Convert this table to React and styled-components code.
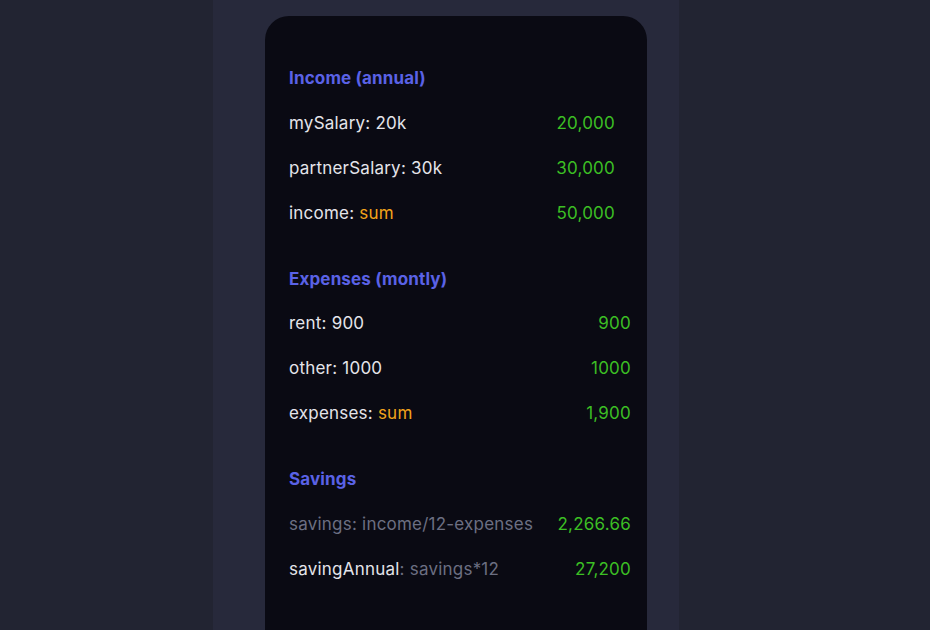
import React from 'react';
import styled, { createGlobalStyle } from 'styled-components';

const GlobalStyle = createGlobalStyle`
  html, body {
    margin: 0;
    padding: 0;
    background: #222432;
    font-family: Inter, "Noto Sans", sans-serif;
  }
`;

const Page = styled.div`
  height: 630px;
  overflow: hidden;
`;

const Strip = styled.div`
  margin-left: 213px;
  width: 466px;
  height: 100%;
  background: #27293b;
  padding: 16px 0 0 52px;
  box-sizing: border-box;
`;

const Card = styled.div`
  width: 382px;
  min-height: 700px;
  background: #0a0a13;
  border-radius: 24px;
  padding: 39px 16px 0 24px;
  box-sizing: border-box;
  display: flex;
  flex-direction: column;
  gap: 20.5px;
`;

const Section = styled.div`
  display: flex;
  flex-direction: column;
  padding-right: ${({ $inset }) => ($inset ? '16px' : '0')};
`;

const Heading = styled.div`
  height: 45px;
  padding-top: 2px;
  line-height: 43px;
  box-sizing: border-box;
  font-size: 17px;
  font-weight: 700;
  letter-spacing: 0.15px;
  color: #5a62e6;
`;

const Row = styled.div`
  height: 45px;
  display: flex;
  align-items: center;
  justify-content: space-between;
  font-size: 17px;
  letter-spacing: 0.22px;
  color: #e4e4ea;
`;

const Name = styled.span`
  color: ${({ $dim }) => ($dim ? '#6c6f82' : '#e4e4ea')};
`;

const Expr = styled.span`
  color: ${({ $kind }) => ($kind === 'sum' ? '#f2a31b' : '#6c6f82')};
`;

const Value = styled.span`
  color: #3cbf24;
`;

const sections = [
  {
    title: 'Income (annual)',
    inset: true,
    rows: [
      { name: 'mySalary: 20k', value: '20,000' },
      { name: 'partnerSalary: 30k', value: '30,000' },
      { name: 'income: ', expr: 'sum', kind: 'sum', value: '50,000' },
    ],
  },
  {
    title: 'Expenses (montly)',
    rows: [
      { name: 'rent: 900', value: '900' },
      { name: 'other: 1000', value: '1000' },
      { name: 'expenses: ', expr: 'sum', kind: 'sum', value: '1,900' },
    ],
  },
  {
    title: 'Savings',
    rows: [
      { name: 'savings: income/12-expenses', dim: true, value: '2,266.66' },
      { name: 'savingAnnual', expr: ': savings*12', kind: 'ref', value: '27,200' },
    ],
  },
];

const App = () => (
  <Page>
    <GlobalStyle />
    <Strip>
      <Card>
        {sections.map((section) => (
          <Section key={section.title} $inset={section.inset}>
            <Heading>{section.title}</Heading>
            {section.rows.map((row) => (
              <Row key={row.name}>
                <span>
                  <Name $dim={row.dim}>{row.name}</Name>
                  {row.expr && <Expr $kind={row.kind}>{row.expr}</Expr>}
                </span>
                <Value>{row.value}</Value>
              </Row>
            ))}
          </Section>
        ))}
      </Card>
    </Strip>
  </Page>
);

export default App;
